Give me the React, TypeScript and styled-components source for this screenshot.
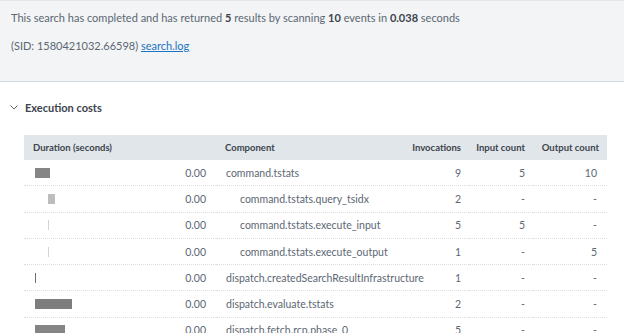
import React from "react";
import styled, { createGlobalStyle } from "styled-components";

const GlobalStyle = createGlobalStyle`
  body {
    margin: 0;
    background: #ffffff;
    font-family: Lato, "Liberation Sans", sans-serif;
    color: #5c6773;
  }
`;

const Summary = styled.div`
  height: 82px;
  box-sizing: border-box;
  background: #f2f4f5;
  border-top: 1px solid #e3e7ea;
  border-bottom: 1px solid #d5dade;
  padding: 9px 11px 0;
  font-size: 11px;
`;

const SummaryLine = styled.div`
  line-height: 16px;
  margin-bottom: 12px;
  b {
    color: #3c444d;
    font-weight: 700;
  }
`;

const Link = styled.a`
  color: #1a73c2;
  text-decoration: underline;
`;

const Section = styled.div`
  padding: 17px 17px 0 24px;
`;

const Heading = styled.div`
  display: flex;
  align-items: center;
  gap: 7px;
  margin-left: -14px;
  font-size: 11px;
  font-weight: 700;
  color: #3c444d;
  height: 16px;
`;

const Table = styled.table`
  margin-top: 20px;
  width: 583px;
  border-collapse: collapse;
  table-layout: fixed;
  font-size: 10.5px;
`;

const HeadCell = styled.th<{ $align?: string }>`
  background: #e1e6ea;
  height: 25px;
  padding: 0 8px 0 ${(p) => (p.$align === "right" ? 0 : 9)}px;
  text-align: ${(p) => p.$align || "left"};
  font-weight: 700;
  color: #3c444d;
  font-size: 9.5px;
  white-space: nowrap;
`;

const Row = styled.tr`
  & + & td {
    border-top: 1px dotted #d8dde1;
  }
`;

const Cell = styled.td<{ $align?: string; $indent?: number }>`
  height: 25.3px;
  padding: 0 8px 0 ${(p) => 10 + (p.$indent || 0)}px;
  text-align: ${(p) => p.$align || "left"};
  white-space: nowrap;
`;

const DurationCell = styled.td<{ $indent: number }>`
  height: 25.3px;
  padding: 0 10px 0 ${(p) => 11 + p.$indent}px;
`;

const DurationInner = styled.div`
  display: flex;
  align-items: center;
  justify-content: space-between;
`;

const Bar = styled.div<{ $shade: string }>`
  height: 10px;
  background: ${(p) => p.$shade};
`;

type Item = {
  name: string;
  depth: number;
  bar: number;
  shade: string;
  inv: string;
  input: string;
  output: string;
};

const rows: Item[] = [
  { name: "command.tstats", depth: 0, bar: 15, shade: "#858585", inv: "9", input: "5", output: "10" },
  { name: "command.tstats.query_tsidx", depth: 1, bar: 7, shade: "#bdbdbd", inv: "2", input: "-", output: "-" },
  { name: "command.tstats.execute_input", depth: 1, bar: 1, shade: "#d4d4d4", inv: "5", input: "5", output: "-" },
  { name: "command.tstats.execute_output", depth: 1, bar: 1, shade: "#d4d4d4", inv: "1", input: "-", output: "5" },
  { name: "dispatch.createdSearchResultInfrastructure", depth: 0, bar: 1, shade: "#6e6e6e", inv: "1", input: "-", output: "-" },
  { name: "dispatch.evaluate.tstats", depth: 0, bar: 37, shade: "#7d7d7d", inv: "2", input: "-", output: "-" },
  { name: "dispatch.fetch.rcp.phase_0", depth: 0, bar: 30, shade: "#858585", inv: "5", input: "-", output: "-" },
];

const Chevron = () => (
  <svg width="8" height="5" viewBox="0 0 8 5" fill="none">
    <path d="M0.5 0.5L4 4L7.5 0.5" stroke="#5c6773" strokeWidth="1" />
  </svg>
);

export default function App() {
  return (
    <>
      <GlobalStyle />
      <Summary>
        <SummaryLine>
          This search has completed and has returned <b>5</b> results by scanning <b>10</b> events in{" "}
          <b>0.038</b> seconds
        </SummaryLine>
        <SummaryLine>
          (SID: 1580421032.66598) <Link href="#">search.log</Link>
        </SummaryLine>
      </Summary>
      <Section>
        <Heading>
          <Chevron />
          Execution costs
        </Heading>
        <Table>
          <colgroup>
            <col style={{ width: 192 }} />
            <col style={{ width: 194 }} />
            <col style={{ width: 59 }} />
            <col style={{ width: 64 }} />
            <col style={{ width: 74 }} />
          </colgroup>
          <thead>
            <tr>
              <HeadCell>Duration (seconds)</HeadCell>
              <HeadCell>Component</HeadCell>
              <HeadCell $align="right">Invocations</HeadCell>
              <HeadCell $align="right">Input count</HeadCell>
              <HeadCell $align="right">Output count</HeadCell>
            </tr>
          </thead>
          <tbody>
            {rows.map((r) => (
              <Row key={r.name}>
                <DurationCell $indent={r.depth * 13}>
                  <DurationInner>
                    <Bar $shade={r.shade} style={{ width: r.bar }} />
                    <span>0.00</span>
                  </DurationInner>
                </DurationCell>
                <Cell $indent={r.depth * 14}>{r.name}</Cell>
                <Cell $align="right">{r.inv}</Cell>
                <Cell $align="right">{r.input}</Cell>
                <Cell $align="right" style={{ paddingRight: 10 }}>{r.output}</Cell>
              </Row>
            ))}
          </tbody>
        </Table>
      </Section>
    </>
  );
}
